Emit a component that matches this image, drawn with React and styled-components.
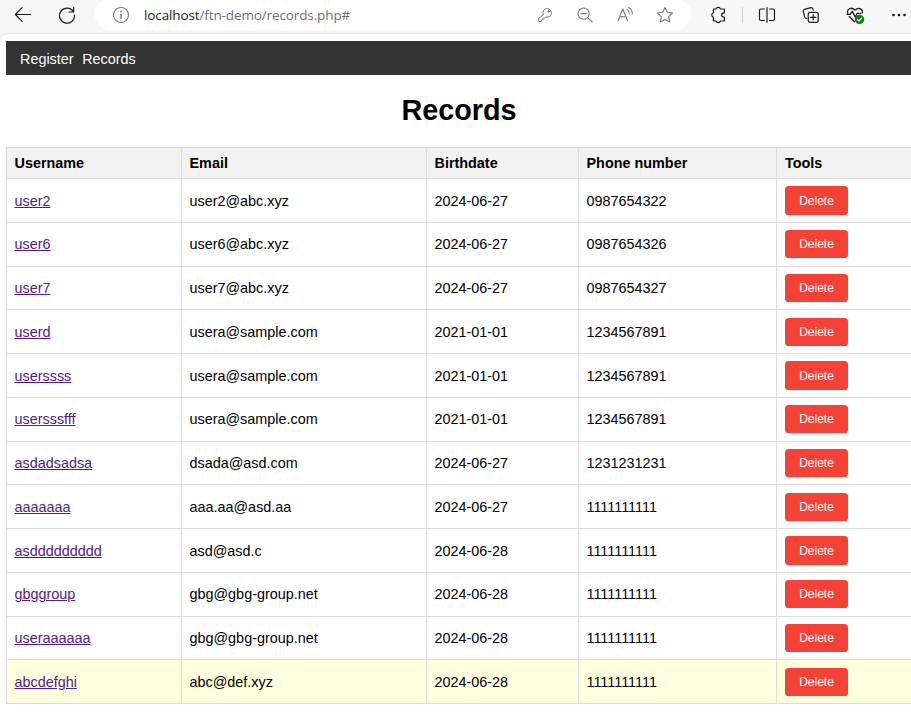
import React from "react";
import styled, { createGlobalStyle } from "styled-components";

const GlobalStyle = createGlobalStyle`
  * { box-sizing: border-box; }
  html, body { margin: 0; padding: 0; overflow: hidden; background: #fff; }
`;

const Window = styled.div`
  width: 911px;
  height: 715px;
  overflow: hidden;
  display: flex;
  flex-direction: column;
  background: #f6f6f6;
  font-family: "Liberation Sans", Arial, sans-serif;
`;

const Toolbar = styled.header`
  height: 33px;
  flex: none;
  display: flex;
  align-items: flex-start;
  padding-left: 13px;
`;

const Icon = styled.svg`
  width: 20px;
  height: 20px;
  flex: none;
  display: block;
  margin-top: 5px;
  margin-left: ${(p) => p.$gap || 0}px;
  fill: none;
  stroke: ${(p) => p.$color || "#1b1b1b"};
  stroke-width: ${(p) => p.$weight || 1.2};
  stroke-linecap: round;
  stroke-linejoin: round;
`;

const AddressBar = styled.div`
  width: 596px;
  height: 30px;
  flex: none;
  margin-left: 18px;
  display: flex;
  background: #fff;
  border-radius: 13px 13px 15px 15px;
`;

const Url = styled.div`
  width: 391px;
  flex: none;
  margin-left: 13px;
  font: 13.5px/30px "Open Sans", "Noto Sans", sans-serif;
  letter-spacing: -0.12px;
  color: #707070;
  white-space: nowrap;
`;

const Host = styled.span`
  color: #1b1b1b;
`;

const Divider = styled.div`
  width: 1px;
  height: 16px;
  flex: none;
  margin: 7px 0 0 14px;
  background: #cfcfcf;
`;

const Page = styled.main`
  flex: 1;
  width: 912px;
  min-height: 0;
  padding: 7px 0 0 6px;
  background: #fff;
  border-top: 1px solid #e6e6e6;
  border-top-left-radius: 8px;
`;

const Nav = styled.nav`
  height: 34px;
  display: flex;
  gap: 8.6px;
  padding-left: 14px;
  background: #333;
`;

const NavLink = styled.a`
  color: #fff;
  font-size: 14.4px;
  line-height: 37px;
`;

const Title = styled.h1`
  height: 72px;
  margin: 0;
  font-size: 28.8px;
  line-height: 71px;
  text-align: center;
`;

const Table = styled.div`
  width: 920px;
  border-left: 1px solid #ddd;
  border-bottom: 1px solid #ddd;
`;

const Row = styled.div`
  height: ${(p) => (p.$head ? 31 : 43.75)}px;
  display: grid;
  grid-template-columns: 175px 245px 152px 198px 1fr;
  background: ${(p) => (p.$head ? "#f2f2f2" : p.$active ? "#ffffe0" : "#fff")};
  font-weight: ${(p) => (p.$head ? 700 : 400)};
`;

const Cell = styled.div`
  display: flex;
  align-items: center;
  padding-top: ${(p) => p.$drop || 0}px;
  padding-left: 7.5px;
  font-size: 14.4px;
  color: #000;
  border-top: 1px solid #ddd;
  border-right: 1px solid #ddd;

  &:last-child {
    padding-left: 8px;
  }
`;

const UserLink = styled.a`
  color: #551a8b;
  text-decoration: underline;
`;

const DeleteButton = styled.button`
  width: 63px;
  height: 28.25px;
  padding: 0;
  border: 0;
  border-radius: 3.6px;
  background: #f44336;
  color: #fff;
  font: 12px "Liberation Sans", Arial, sans-serif;
`;

const gray = "#767676";
const headings = ["Username", "Email", "Birthdate", "Phone number", "Tools"];
const records = [
  ["user2", "user2@abc.xyz", "2024-06-27", "0987654322"],
  ["user6", "user6@abc.xyz", "2024-06-27", "0987654326"],
  ["user7", "user7@abc.xyz", "2024-06-27", "0987654327"],
  ["userd", "usera@sample.com", "2021-01-01", "1234567891"],
  ["userssss", "usera@sample.com", "2021-01-01", "1234567891"],
  ["usersssfff", "usera@sample.com", "2021-01-01", "1234567891"],
  ["asdadsadsa", "dsada@asd.com", "2024-06-27", "1231231231"],
  ["aaaaaaa", "aaa.aa@asd.aa", "2024-06-27", "1111111111"],
  ["asddddddddd", "asd@asd.c", "2024-06-28", "1111111111"],
  ["gbggroup", "gbg@gbg-group.net", "2024-06-28", "1111111111"],
  ["useraaaaaa", "gbg@gbg-group.net", "2024-06-28", "1111111111"],
  ["abcdefghi", "abc@def.xyz", "2024-06-28", "1111111111"],
];

function BrowserToolbar() {
  return (
    <Toolbar>
      <Icon>
        <path d="M17.7 9.5H2.5M9.2 2.7L2.4 9.5L9.2 16.3" />
      </Icon>
      <Icon $gap={24}>
        <path d="M16.6 2.4V7H12M16.4 6.7A7.5 7.5 0 1 0 17.5 10" />
      </Icon>
      <AddressBar>
        <Icon $gap={16} $color={gray} $weight={1.1}>
          <circle cx="10" cy="10" r="7.5" />
          <path d="M10 9.3V13.6" strokeWidth="1.4" />
          <circle cx="10" cy="6.5" r=".9" fill={gray} stroke="none" />
        </Icon>
        <Url>
          <Host>localhost</Host>/ftn-demo/records.php#
        </Url>
        <Icon $color={gray} $weight={1}>
          <path d="M8.2 9.2C7.2 5.9 9.2 3.6 12.2 3.6C14.6 3.6 16.4 5.2 16.4 7.8C16.4 10.8 13.9 12.8 10.9 11.9L9.6 13.2H8.1V14.7H6.7V16.1L6.1 16.5H3.7V13.7Z" />
          <circle cx="13.5" cy="6.5" r=".7" fill={gray} />
        </Icon>
        <Icon $gap={20} $color={gray} $weight={1.1}>
          <circle cx="8.6" cy="8.6" r="5.6" />
          <path d="M12.8 12.8L17 17M6 8.6H11.2" />
        </Icon>
        <Icon $gap={20} $color={gray} $weight={1.1}>
          <path d="M3 15.8L7.8 4L12.6 15.8M4.6 11.8H11M12 4.4Q14.1 5.8 14.2 8.8M13.6 2.5Q17.5 4.6 17.3 9" />
        </Icon>
        <Icon $gap={20} $color={gray} $weight={1.1}>
          <path d="M10 2.5L12.3 7.2L17.5 8L13.7 11.7L14.6 17L10 14.5L5.4 17L6.3 11.7L2.5 8L7.7 7.2Z" />
        </Icon>
      </AddressBar>
      <Icon $gap={17}>
        <path d="M6 4H8A2.3 2.3 0 0 1 12.4 4H15.8Q16.4 4 16.4 4.6V7.8H15.8A2 2 0 0 0 15.8 12H16.4V15.4Q16.4 16 15.8 16H12.4A2.3 2.3 0 0 1 8 16H6Q5.4 16 5.4 15.4V12.2A2.3 2.3 0 0 1 5.4 7.8V4.6Q5.4 4 6 4Z" />
      </Icon>
      <Divider />
      <Icon $gap={14}>
        <path d="M7.5 4H4Q2.5 4 2.5 5.5V14Q2.5 15.5 4 15.5H7.5M12.5 4H16Q17.5 4 17.5 5.5V14Q17.5 15.5 16 15.5H12.5M10 2.5V17.5" />
      </Icon>
      <Icon $gap={24}>
        <rect x="7.2" y="7.3" width="10" height="10" rx="2" />
        <path d="M12.2 9.6V15M9.5 12.3H14.9M5.5 13.5L4.6 13Q3.9 12.5 3.6 11.6L2.3 6.4Q2 4.8 3.5 4.3L9.8 2.6Q11.3 2.3 11.8 3.7L12.2 5.1" />
      </Icon>
      <Icon $gap={24} $weight={1.3}>
        <path d="M2.8 8.2C1.4 4.3 6.3 1.3 10 5.1C13.7 1.3 18.7 4.4 17.1 8.2M2 9.3H5L7.3 6.4L10.2 12L12.2 8.3H15.5M4.3 11.5L9.5 16.8" />
        <circle cx="14.5" cy="14.4" r="4.7" fill="#107c10" stroke="none" />
        <path d="M12.4 14.5L13.9 16L16.8 13" stroke="#fff" strokeWidth="1.1" />
      </Icon>
      <Icon $gap={24}>
        <g fill="#1b1b1b" stroke="none">
          <circle cx="4.5" cy="10" r="1.35" />
          <circle cx="10" cy="10" r="1.35" />
          <circle cx="15.5" cy="10" r="1.35" />
        </g>
      </Icon>
    </Toolbar>
  );
}

export default function App() {
  return (
    <>
      <GlobalStyle />
      <Window>
        <BrowserToolbar />
        <Page>
          <Nav>
            <NavLink>Register</NavLink>
            <NavLink>Records</NavLink>
          </Nav>
          <Title>Records</Title>
          <Table>
            <Row $head>
              {headings.map((h) => (
                <Cell key={h}>{h}</Cell>
              ))}
            </Row>
            {records.map(([user, ...rest]) => (
              <Row key={user} $active={user === "abcdefghi"}>
                <Cell $drop={0.6}>
                  <UserLink>{user}</UserLink>
                </Cell>
                {rest.map((value, i) => (
                  <Cell key={i} $drop={0.6}>
                    {value}
                  </Cell>
                ))}
                <Cell $drop={0.25}>
                  <DeleteButton>Delete</DeleteButton>
                </Cell>
              </Row>
            ))}
          </Table>
        </Page>
      </Window>
    </>
  );
}
